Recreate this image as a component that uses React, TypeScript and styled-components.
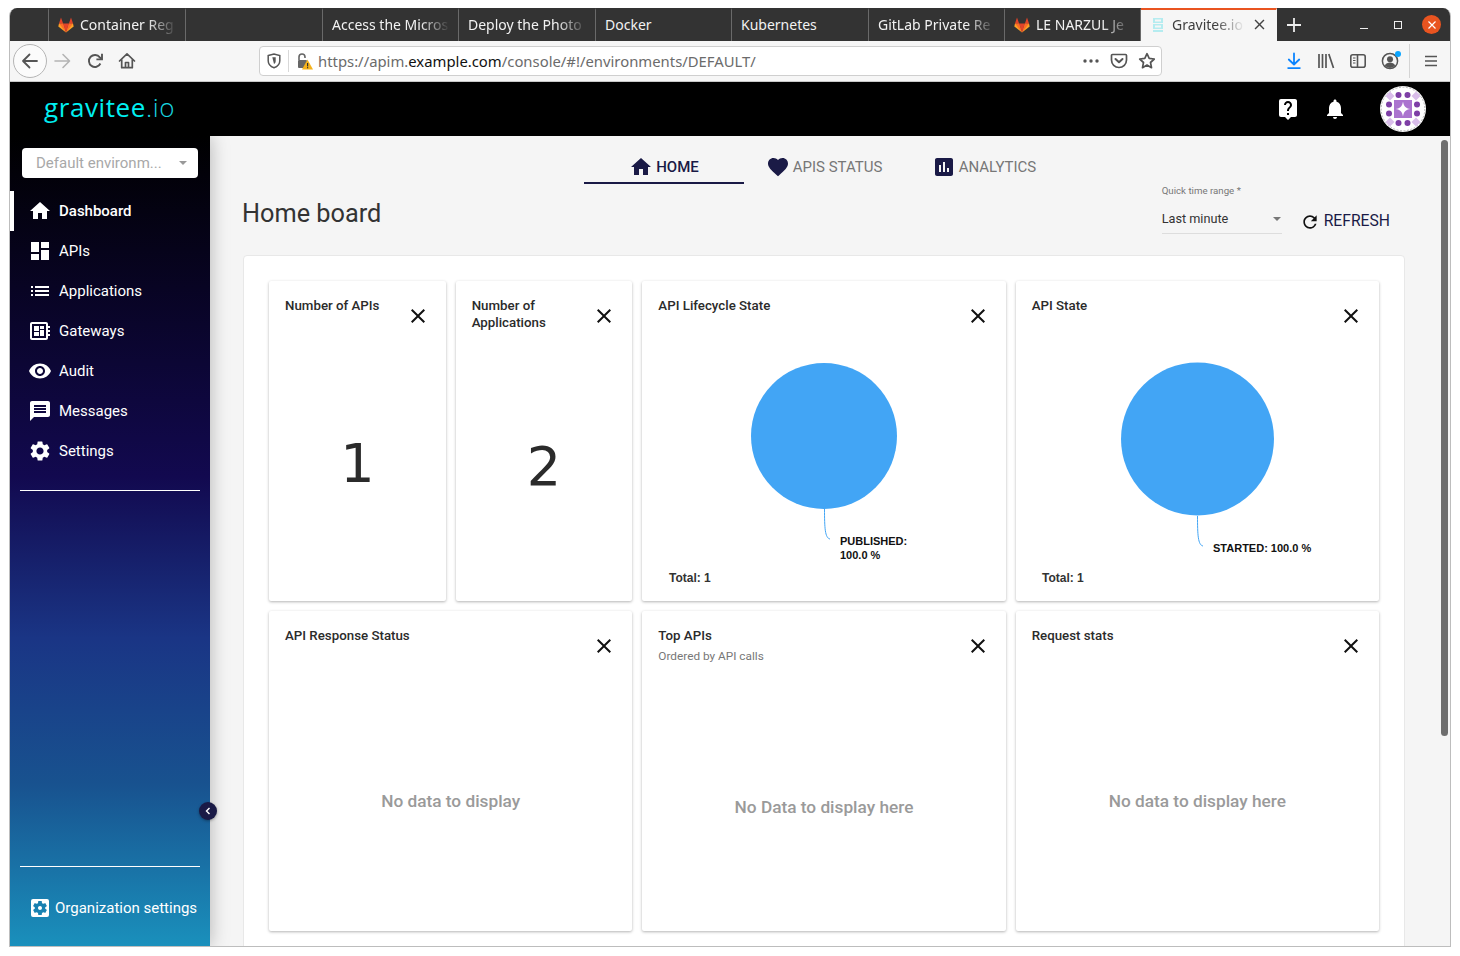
import React from 'react';
import styled, { createGlobalStyle } from 'styled-components';
import {
  MdAssessment,
  MdClose,
  MdDashboard,
  MdDeveloperBoard,
  MdFavorite,
  MdHome,
  MdList,
  MdLiveHelp,
  MdMessage,
  MdNotifications,
  MdRefresh,
  MdSettings,
  MdSettingsApplications,
  MdVisibility,
} from 'react-icons/md';

const uiFont = `Roboto, "Liberation Sans", sans-serif`;
const chromeFont = `"Noto Sans", "Open Sans", sans-serif`;
const chartFont = `"Liberation Sans", Arial, sans-serif`;
const navy = '#1a1a46';

const GlobalStyle = createGlobalStyle`
  html, body {
    margin: 0;
    height: 100%;
    background: #fff;
    overflow: hidden;
  }
  * {
    box-sizing: border-box;
  }
`;

const Screen = styled.div`
  height: 956px;
  padding: 8px 9px 9px;
`;

const Window = styled.div`
  height: 100%;
  display: flex;
  flex-direction: column;
  border: 1px solid #bdbdbd;
  border-top: 0;
  border-radius: 8px 8px 0 0;
  overflow: hidden;
`;

/* browser chrome */

const TabBar = styled.div`
  height: 33px;
  flex: none;
  display: flex;
  background: #333;
  color: #f2f2f2;
  font: 14px ${chromeFont};
`;

const Tab = styled.div<{ $active?: boolean; $width: number }>`
  width: ${(p) => p.$width}px;
  flex: none;
  display: flex;
  align-items: center;
  gap: 6px;
  padding: 0 8px 2px 9px;
  background: ${(p) => (p.$active ? '#f6f6f6' : 'transparent')};
  color: ${(p) => (p.$active ? '#3d3d3d' : 'inherit')};
  border-top: 2px solid ${(p) => (p.$active ? '#e95420' : 'transparent')};
  border-right: 1px solid ${(p) => (p.$active ? 'transparent' : '#6a6a6a')};
`;

const TabLabel = styled.span<{ $fade?: boolean }>`
  flex: 1;
  min-width: 0;
  white-space: nowrap;
  ${(p) => p.$fade && 'mask-image: linear-gradient(to left, transparent 0, #000 30px);'}
`;

const NewTab = styled.div`
  width: 34px;
  display: flex;
  align-items: center;
  justify-content: center;
`;

const WindowControls = styled.div`
  margin-left: auto;
  display: flex;
  align-items: center;
  padding-right: 9px;
  gap: 15px;
`;

const ControlSlot = styled.div`
  width: 19px;
  height: 19px;
  display: flex;
  align-items: center;
  justify-content: center;
`;

const CloseDot = styled(ControlSlot)`
  border-radius: 50%;
  background: #e95420;
`;

const Toolbar = styled.div`
  height: 41px;
  flex: none;
  display: flex;
  align-items: center;
  padding: 0 0 0 3px;
  background: #f6f6f6;
  border-bottom: 1px solid #c8c8c8;
`;

const BackButton = styled.div`
  width: 34px;
  height: 34px;
  flex: none;
  display: flex;
  align-items: center;
  justify-content: center;
  border: 1px solid #b5b5b5;
  border-radius: 50%;
  background: #fbfbfb;
`;

const ToolSlot = styled.div<{ $w?: number }>`
  width: ${(p) => p.$w ?? 32}px;
  flex: none;
  display: flex;
  align-items: center;
  justify-content: center;
  position: relative;
`;

const UrlBar = styled.div`
  width: 903px;
  height: 30px;
  flex: none;
  margin: 0 116px 0 116px;
  display: flex;
  align-items: center;
  padding: 0 0 0 5px;
  background: #fff;
  border: 1px solid #cfcfcf;
  border-radius: 4px;
`;

const UrlDivider = styled.div`
  width: 1px;
  height: 22px;
  margin: 0 8px 0 6px;
  background: #d8d8d8;
`;

const UrlText = styled.div`
  flex: 1;
  margin-left: 5px;
  color: #6b6b6b;
  font: 14.85px ${chromeFont};
  white-space: nowrap;
  b {
    font-weight: 400;
    color: #111;
  }
`;

const ToolDivider = styled.div`
  width: 1px;
  height: 34px;
  margin: 0 8px 0 3px;
  background: #d4d4d4;
`;

/* application */

const AppHeader = styled.header`
  height: 54px;
  flex: none;
  display: flex;
  align-items: center;
  gap: 23px;
  padding: 0 24px 0 34px;
  background: #000;
  color: #fff;
`;

const Logo = styled.div`
  margin-right: auto;
  margin-top: -5px;
  color: #00f0f2;
  font: 400 26px "Open Sans", sans-serif;
  letter-spacing: 0.6px;
  span {
    font-weight: 300;
    color: #19d6e0;
  }
`;

const Avatar = styled.div`
  width: 46px;
  height: 46px;
  margin-left: 10px;
`;

const Body = styled.div`
  flex: 1;
  min-height: 0;
  display: flex;
`;

const Sidebar = styled.aside`
  width: 200px;
  flex: none;
  position: relative;
  z-index: 1;
  display: flex;
  flex-direction: column;
  color: #fff;
  font: 15px ${uiFont};
  background: linear-gradient(180deg, #000 0%, #12094f 42%, #1a3585 62%, #18528f 80%, #1a90bc 100%);
  box-shadow: 0 0 18px rgba(0, 0, 0, 0.28);
`;

const EnvSelect = styled.div`
  height: 30px;
  margin: 12px 12px 13px;
  display: flex;
  align-items: center;
  justify-content: space-between;
  padding: 0 11px 0 14px;
  background: #fff;
  border-radius: 4px;
  color: #a8a8a8;
  line-height: 32px;
`;

const Caret = styled.i<{ $color?: string }>`
  width: 0;
  height: 0;
  border-left: 4px solid transparent;
  border-right: 4px solid transparent;
  border-top: 4px solid ${(p) => p.$color ?? '#999'};
`;

const NavList = styled.nav`
  display: flex;
  flex-direction: column;
`;

const NavItem = styled.div<{ $active?: boolean }>`
  height: 40px;
  position: relative;
  display: flex;
  align-items: center;
  gap: 7px;
  padding-left: 18px;
  font-weight: ${(p) => (p.$active ? 500 : 400)};
  ${(p) =>
    p.$active &&
    `&::before {
      content: '';
      position: absolute;
      left: 0;
      top: 0;
      width: 4px;
      height: 40px;
      background: #fff;
    }`}
`;

const SideRule = styled.hr<{ $top?: number }>`
  margin: ${(p) => p.$top ?? 19}px 10px 0;
  border: 0;
  border-top: 1px solid #fff;
`;

const OrgLink = styled.div`
  height: 80px;
  display: flex;
  align-items: flex-start;
  padding: 29px 0 0 18px;
  gap: 3px;
  line-height: 24px;
`;

const CollapseButton = styled.div`
  position: absolute;
  right: -7px;
  top: 666px;
  width: 18px;
  height: 18px;
  display: flex;
  align-items: center;
  justify-content: center;
  border-radius: 50%;
  background: ${navy};
  box-shadow: 0 1px 3px rgba(0, 0, 0, 0.35);
`;

const Main = styled.main`
  flex: 1;
  min-width: 0;
  display: flex;
  background: #f5f5f5;
  font: 14px ${uiFont};
`;

const Content = styled.div`
  flex: 1;
  min-width: 0;
  padding: 0 33px;
  overflow: hidden;
`;

const TabsRow = styled.div`
  height: 48px;
  display: flex;
  justify-content: center;
`;

const BoardTab = styled.div<{ $active?: boolean }>`
  width: 160px;
  display: flex;
  align-items: center;
  justify-content: center;
  gap: 3px;
  padding-top: 15px;
  font-size: 15px;
  color: ${(p) => (p.$active ? navy : '#777')};
  font-weight: ${(p) => (p.$active ? 500 : 400)};
  border-bottom: 2px solid ${(p) => (p.$active ? navy : 'transparent')};
  svg {
    color: ${navy};
  }
`;

const TitleRow = styled.div`
  height: 71px;
  display: flex;
  justify-content: space-between;
`;

const PageTitle = styled.h1`
  margin: 15px 0 0 -1px;
  font-size: 25.3px;
  line-height: 30px;
  font-weight: 400;
  color: #333;
`;

const Filters = styled.div`
  display: flex;
  gap: 18px;
  padding-right: 15px;
`;

const TimeRange = styled.div`
  width: 120px;
  height: 50px;
  flex: none;
`;

const TimeLabel = styled.div`
  font-size: 9.7px;
  line-height: 14px;
  color: #777;
`;

const TimeValue = styled.div`
  height: 30px;
  margin-top: 6px;
  display: flex;
  align-items: center;
  justify-content: space-between;
  padding: 0 1px 0 0;
  font-size: 12.7px;
  color: #333;
  border-bottom: 1px solid #ddd;
`;

const RefreshButton = styled.div`
  height: 24px;
  margin-top: 24px;
  display: flex;
  align-items: center;
  gap: 4px;
  color: ${navy};
  font-size: 15.7px;
  svg {
    color: #111;
    margin-top: 3px;
  }
`;

const Panel = styled.section`
  height: 720px;
  padding: 25px;
  background: #fff;
  border: 1px solid #e8e8e8;
  border-radius: 4px;
`;

const CardGrid = styled.div`
  display: grid;
  grid-template-columns: repeat(6, 1fr);
  grid-auto-rows: 320px;
  gap: 10px;
`;

const Card = styled.article<{ $span: number }>`
  grid-column: span ${(p) => p.$span};
  min-width: 0;
  display: flex;
  flex-direction: column;
  background: #fff;
  border-radius: 2px;
  box-shadow: 0 1px 3px rgba(0, 0, 0, 0.3);
`;

const CardHeader = styled.div`
  display: flex;
  justify-content: space-between;
  padding: 16px 16px 0;
`;

const CardHeading = styled.div`
  min-width: 0;
  padding-bottom: 3px;
`;

const CardTitle = styled.div`
  font-size: 13.3px;
  line-height: 17px;
  font-weight: 500;
  color: #2b2b2b;
`;

const CardSubtitle = styled.div`
  margin: 5px 0 4px;
  font-size: 11.8px;
  line-height: 14px;
  color: #777;
`;

const CloseIcon = styled(MdClose)`
  flex: none;
  margin-top: 7px;
  color: #111;
`;

const BigValue = styled.div`
  flex: 1;
  display: flex;
  align-items: center;
  justify-content: center;
  padding-bottom: 2px;
  font: 54px "DejaVu Sans", sans-serif;
  color: #2b2b2b;
`;

const EmptyText = styled.div`
  flex: 1;
  display: flex;
  align-items: center;
  justify-content: center;
  padding-top: 13px;
  font-size: 17.25px;
  font-weight: 500;
  color: #9a9a9a;
`;

const ChartSvg = styled.svg`
  display: block;
  flex: 1;
  min-height: 0;
  width: 100%;
  font-family: ${chartFont};
`;

const ChartLabel = styled.text`
  font-size: 11px;
  font-weight: 700;
  fill: #111;
`;

const ChartTotal = styled.text`
  font-size: 12px;
  font-weight: 700;
  fill: #333;
`;

const ScrollTrack = styled.div`
  width: 12px;
  flex: none;
  padding: 4px 2px 0 3px;
`;

const ScrollThumb = styled.div`
  height: 596px;
  border-radius: 4px;
  background: #6e6e6e;
`;

/* small drawings */

const GitlabIcon = () => (
  <svg width="16" height="16" viewBox="0 0 16 16">
    <path d="M8 15.4 0.3 9.4 1 6.4h4z" fill="#fca326" />
    <path d="M8 15.4 15.7 9.4 15 6.4h-4z" fill="#fca326" />
    <path d="M8 15.4 1 6.4h4.2z" fill="#fc6d26" />
    <path d="M8 15.4 15 6.4h-4.2z" fill="#fc6d26" />
    <path d="M8 15.4 5.1 6.4h5.8z" fill="#e24329" />
    <path d="M1 6.4 3 .6l2.1 5.8zM15 6.4 13 .6l-2.1 5.8z" fill="#e24329" />
  </svg>
);

const GraviteeFavicon = () => (
  <svg width="16" height="16" viewBox="0 0 16 16">
    <path d="M3 1h10v5H3zM5 2.500v2h6v-2zM3 7h10v5H3zM5 8.500v2h6v-2zM3 13h10v2H3z" fill="#b5ecf0" fillRule="evenodd" />
  </svg>
);

const stroke = { fill: 'none', strokeLinecap: 'round', strokeLinejoin: 'round' } as const;

const BackIcon = () => (
  <svg width="20" height="20" viewBox="0 0 20 20" {...stroke} stroke="#555" strokeWidth="1.8">
    <path d="M17 10H3M9.5 3.5 3 10l6.5 6.5" />
  </svg>
);

const ForwardIcon = () => (
  <svg width="20" height="20" viewBox="0 0 20 20" {...stroke} stroke="#b4b4b4" strokeWidth="1.6">
    <path d="M2 10h14M10 3.5 16.5 10 10 16.5" />
  </svg>
);

const ReloadIcon = () => (
  <svg width="18" height="18" viewBox="0 0 18 18" fill="none" stroke="#555" strokeWidth="1.9">
    <path d="M14.4 11.5A6 6 0 1 1 13.8 5.4L15.5 7" />
    <path d="M16 1.8V7.4H10.4" strokeLinejoin="miter" />
  </svg>
);

const HomeIcon = () => (
  <svg width="18" height="18" viewBox="0 0 18 18" {...stroke} stroke="#555" strokeWidth="1.7">
    <path d="M1.5 9 9 1.8 16.5 9M3.7 7.5v8.2h10.6V7.5M7.500 15.500v-5h3v5" />
  </svg>
);

const ShieldIcon = () => (
  <svg width="14" height="16" viewBox="0 0 14 16" fill="none" stroke="#555" strokeWidth="1.5">
    <path d="M1.2 2.5 7 1l5.8 1.5v5.2c0 3.4-2.6 5.9-5.8 7-3.2-1.100-5.800-3.600-5.800-7z" />
    <path d="M5.300 4.300h3.400v3.800c0 1.500-.8 2.500-1.700 3z" fill="#555" stroke="none" />
  </svg>
);

const LockWarnIcon = () => (
  <svg width="16" height="18" viewBox="0 0 16 18">
    <path d="M2 8V5a3 3 0 0 1 6 0v1" fill="none" stroke="#666" strokeWidth="1.6" />
    <rect x="1" y="8" width="9" height="8" rx="1" fill="#666" />
    <path d="M10.500 7.500 16 17.500H5z" fill="#f5b21b" />
    <rect x="10" y="11" width="1.200" height="3.400" fill="#333" />
    <rect x="10" y="15.100" width="1.200" height="1.200" fill="#333" />
  </svg>
);

const DotsIcon = () => (
  <svg width="18" height="6" viewBox="0 0 18 6" fill="#555">
    <circle cx="3" cy="3" r="1.700" />
    <circle cx="9" cy="3" r="1.700" />
    <circle cx="15" cy="3" r="1.700" />
  </svg>
);

const PocketIcon = () => (
  <svg width="18" height="18" viewBox="0 0 18 18" {...stroke} stroke="#555" strokeWidth="1.700">
    <path d="M2.500 2.500h13a1 1 0 0 1 1 1V8a7.500 7.500 0 0 1-15 0V3.500a1 1 0 0 1 1-1z" />
    <path d="M5.500 7 9 10.300 12.500 7" strokeWidth="2" />
  </svg>
);

const StarIcon = () => (
  <svg width="18" height="18" viewBox="0 0 18 18" {...stroke} stroke="#555" strokeWidth="1.700">
    <path d="M9 1.700 11.200 6.400 16.300 7 12.500 10.500 13.500 15.700 9 13.100 4.500 15.700 5.500 10.500 1.700 7 6.800 6.400z" />
  </svg>
);

const DownloadIcon = () => (
  <svg width="18" height="18" viewBox="0 0 18 18" {...stroke} stroke="#0a84ff" strokeWidth="1.800">
    <path d="M9 1.500v10.500M3.800 7.500 9 12.500l5.200-5" />
    <path d="M2.500 16.200h13" strokeLinecap="butt" />
  </svg>
);

const LibraryIcon = () => (
  <svg width="18" height="16" viewBox="0 0 18 16" fill="none" stroke="#555" strokeWidth="1.700">
    <path d="M2 1v14M5.500 1v14M9 1v14M11.800 1l4.700 14" />
  </svg>
);

const SidebarIcon = () => (
  <svg width="18" height="16" viewBox="0 0 18 16" fill="none" stroke="#555" strokeWidth="1.600">
    <rect x="1.800" y="1.800" width="14.400" height="12.400" rx="2" />
    <path d="M8.500 1.800v12.400" />
    <path d="M4 5h2.500M4 7.500h2.500M4 10h2.500" strokeWidth="1.200" />
  </svg>
);

const AccountIcon = () => (
  <svg width="18" height="18" viewBox="0 0 18 18">
    <circle cx="9" cy="9" r="7.600" fill="none" stroke="#555" strokeWidth="1.500" />
    <circle cx="9" cy="7.300" r="3" fill="#555" />
    <path d="M3.800 13.500c1.200-2.300 3-3 5.200-3s4 .7 5.200 3A7 7 0 0 1 9 16a7 7 0 0 1-5.200-2.500z" fill="#555" />
  </svg>
);

const AccountBadge = styled.i`
  position: absolute;
  top: -1px;
  right: 5px;
  width: 6px;
  height: 6px;
  border-radius: 50%;
  background: #0aa5ff;
`;

const MenuIcon = () => (
  <svg width="14" height="12" viewBox="0 0 14 12" stroke="#555" strokeWidth="1.700">
    <path d="M1 1.500h12M1 6h12M1 10.500h12" />
  </svg>
);

const avatarDots = [
  [18.500, 9], [27.500, 9], [18.500, 37], [27.500, 37],
  [9, 18.500], [9, 27.500], [37, 18.500], [37, 27.500],
];

const avatarDiamonds = [
  [10, 10], [36, 10], [10, 36], [36, 36],
];

const AvatarArt = () => (
  <svg width="46" height="46" viewBox="0 0 46 46">
    <circle cx="23" cy="23" r="23" fill="#fff" />
    <circle cx="23" cy="23" r="21.800" fill="none" stroke="#999" strokeWidth="0.700" strokeDasharray="2 1.500" />
    {avatarDiamonds.map(([x, y]) => (
      <path
        key={`${x}-${y}`}
        d={`M${x} ${y - 4.500}L${x + 4.500} ${y}L${x} ${y + 4.500}L${x - 4.500} ${y}Z`}
        fill="#d9bdea"
      />
    ))}
    {avatarDots.map(([x, y]) => (
      <circle key={`${x}-${y}`} cx={x} cy={y} r="3" fill="#7e3fa6" />
    ))}
    <rect x="14" y="14" width="18" height="18" fill="#ab74cf" />
    <path d="M23 15.500c.7 4.500 2.500 6.800 7.500 7.500-5 .7-6.800 3-7.500 7.500-.7-4.500-2.500-6.800-7.500-7.500 5-.7 6.800-3 7.500-7.500z" fill="#fff" />
  </svg>
);

type PieProps = {
  cx: number;
  cy: number;
  r: number;
  leader: string;
  labelX: number;
  labels: { y: number; text: string }[];
  totalX: number;
};

const PieChart = ({ cx, cy, r, leader, labelX, labels, totalX }: PieProps) => (
  <ChartSvg>
    <circle cx={cx} cy={cy} r={r} fill="#42a5f5" />
    <path d={leader} fill="none" stroke="#42a5f5" strokeWidth="1" />
    {labels.map((l) => (
      <ChartLabel key={l.text} x={labelX} y={l.y}>
        {l.text}
      </ChartLabel>
    ))}
    <ChartTotal x={totalX} y={254}>
      Total: 1
    </ChartTotal>
  </ChartSvg>
);

const tabs = [
  { width: 39 },
  { width: 137, title: 'Container Reg', icon: <GitlabIcon />, fade: true },
  { width: 137 },
  { width: 136, title: 'Access the Micros', fade: true },
  { width: 137, title: 'Deploy the Photo', fade: true },
  { width: 136, title: 'Docker' },
  { width: 137, title: 'Kubernetes' },
  { width: 136, title: 'GitLab Private Re', fade: true },
  { width: 136, title: 'LE NARZUL Je', icon: <GitlabIcon />, fade: true },
];

const navItems = [
  { label: 'Dashboard', icon: <MdHome size={24} />, active: true },
  { label: 'APIs', icon: <MdDashboard size={24} /> },
  { label: 'Applications', icon: <MdList size={24} /> },
  { label: 'Gateways', icon: <MdDeveloperBoard size={24} /> },
  { label: 'Audit', icon: <MdVisibility size={24} /> },
  { label: 'Messages', icon: <MdMessage size={24} /> },
  { label: 'Settings', icon: <MdSettings size={24} /> },
];

const CardTop = ({ title, subtitle }: { title: React.ReactNode; subtitle?: string }) => (
  <CardHeader>
    <CardHeading>
      <CardTitle>{title}</CardTitle>
      {subtitle && <CardSubtitle>{subtitle}</CardSubtitle>}
    </CardHeading>
    <CloseIcon size={24} />
  </CardHeader>
);

export default function App() {
  return (
    <Screen>
      <GlobalStyle />
      <Window>
        <TabBar>
          {tabs.map((tab, i) => (
            <Tab key={i} $width={tab.width}>
              {tab.icon}
              {tab.title && <TabLabel $fade={tab.fade}>{tab.title}</TabLabel>}
            </Tab>
          ))}
          <Tab $active $width={136}>
            <GraviteeFavicon />
            <TabLabel $fade>Gravitee.io</TabLabel>
            <MdClose size={17} color="#444" />
          </Tab>
          <NewTab>
            <svg width="14" height="14" viewBox="0 0 14 14" stroke="#eee" strokeWidth="1.800">
              <path d="M7 0v14M0 7h14" />
            </svg>
          </NewTab>
          <WindowControls>
            <ControlSlot>
              <svg width="8" height="8" viewBox="0 0 8 8" stroke="#eee" strokeWidth="1">
                <path d="M0 7.500h8" />
              </svg>
            </ControlSlot>
            <ControlSlot>
              <svg width="8" height="8" viewBox="0 0 8 8" fill="none" stroke="#eee" strokeWidth="1">
                <rect x=".5" y=".5" width="7" height="7" />
              </svg>
            </ControlSlot>
            <CloseDot>
              <svg width="8" height="8" viewBox="0 0 8 8" stroke="#fff" strokeWidth="1.200">
                <path d="M.5.5l7 7M7.500.5l-7 7" />
              </svg>
            </CloseDot>
          </WindowControls>
        </TabBar>

        <Toolbar>
          <BackButton>
            <BackIcon />
          </BackButton>
          <ToolSlot>
            <ForwardIcon />
          </ToolSlot>
          <ToolSlot>
            <ReloadIcon />
          </ToolSlot>
          <ToolSlot>
            <HomeIcon />
          </ToolSlot>
          <UrlBar>
            <ToolSlot $w={17}>
              <ShieldIcon />
            </ToolSlot>
            <UrlDivider />
            <LockWarnIcon />
            <UrlText>
              https://apim.<b>example.com</b>/console/#!/environments/DEFAULT/
            </UrlText>
            <ToolSlot $w={28}>
              <DotsIcon />
            </ToolSlot>
            <ToolSlot $w={28}>
              <PocketIcon />
            </ToolSlot>
            <ToolSlot $w={28}>
              <StarIcon />
            </ToolSlot>
          </UrlBar>
          <ToolSlot>
            <DownloadIcon />
          </ToolSlot>
          <ToolSlot>
            <LibraryIcon />
          </ToolSlot>
          <ToolSlot>
            <SidebarIcon />
          </ToolSlot>
          <ToolSlot>
            <AccountIcon />
            <AccountBadge />
          </ToolSlot>
          <ToolDivider />
          <ToolSlot $w={26}>
            <MenuIcon />
          </ToolSlot>
        </Toolbar>

        <AppHeader>
          <Logo>
            gravitee<span>.io</span>
          </Logo>
          <MdLiveHelp size={24} />
          <MdNotifications size={24} />
          <Avatar>
            <AvatarArt />
          </Avatar>
        </AppHeader>

        <Body>
          <Sidebar>
            <EnvSelect>
              Default environm...
              <Caret />
            </EnvSelect>
            <NavList>
              {navItems.map((item) => (
                <NavItem key={item.label} $active={item.active}>
                  {item.icon}
                  {item.label}
                </NavItem>
              ))}
            </NavList>
            <SideRule />
            <SideRule $top={375} />
            <OrgLink>
              <MdSettingsApplications size={24} />
              Organization settings
            </OrgLink>
            <CollapseButton>
              <svg width="8" height="8" viewBox="0 0 8 8" fill="none" stroke="#fff" strokeWidth="1.400">
                <path d="M5.500 1 2.500 4l3 3" />
              </svg>
            </CollapseButton>
          </Sidebar>

          <Main>
            <Content>
              <TabsRow>
                <BoardTab $active>
                  <MdHome size={24} />
                  HOME
                </BoardTab>
                <BoardTab>
                  <MdFavorite size={24} />
                  APIS STATUS
                </BoardTab>
                <BoardTab>
                  <MdAssessment size={24} />
                  ANALYTICS
                </BoardTab>
              </TabsRow>
              <TitleRow>
                <PageTitle>Home board</PageTitle>
                <Filters>
                  <TimeRange>
                    <TimeLabel>Quick time range *</TimeLabel>
                    <TimeValue>
                      Last minute
                      <Caret $color="#777" />
                    </TimeValue>
                  </TimeRange>
                  <RefreshButton>
                    <MdRefresh size={20} />
                    REFRESH
                  </RefreshButton>
                </Filters>
              </TitleRow>
              <Panel>
                <CardGrid>
                  <Card $span={1}>
                    <CardTop title="Number of APIs" />
                    <BigValue>1</BigValue>
                  </Card>
                  <Card $span={1}>
                    <CardTop title="Number of Applications" />
                    <BigValue>2</BigValue>
                  </Card>
                  <Card $span={2}>
                    <CardTop title="API Lifecycle State" />
                    <PieChart
                      cx={182}
                      cy={108}
                      r={73}
                      leader="M182.500 181C182.500 200 183 210 188 211"
                      labelX={198}
                      labels={[
                        { y: 217, text: 'PUBLISHED:' },
                        { y: 231, text: '100.0 %' },
                      ]}
                      totalX={27}
                    />
                  </Card>
                  <Card $span={2}>
                    <CardTop title="API State" />
                    <PieChart
                      cx={181.5}
                      cy={111}
                      r={76.5}
                      leader="M181.500 188C181.500 207 182 217 187 218"
                      labelX={197}
                      labels={[{ y: 224, text: 'STARTED: 100.0 %' }]}
                      totalX={26}
                    />
                  </Card>
                  <Card $span={2}>
                    <CardTop title="API Response Status" />
                    <EmptyText>No data to display</EmptyText>
                  </Card>
                  <Card $span={2}>
                    <CardTop title="Top APIs" subtitle="Ordered by API calls" />
                    <EmptyText>No Data to display here</EmptyText>
                  </Card>
                  <Card $span={2}>
                    <CardTop title="Request stats" />
                    <EmptyText>No data to display here</EmptyText>
                  </Card>
                </CardGrid>
              </Panel>
            </Content>
            <ScrollTrack>
              <ScrollThumb />
            </ScrollTrack>
          </Main>
        </Body>
      </Window>
    </Screen>
  );
}
